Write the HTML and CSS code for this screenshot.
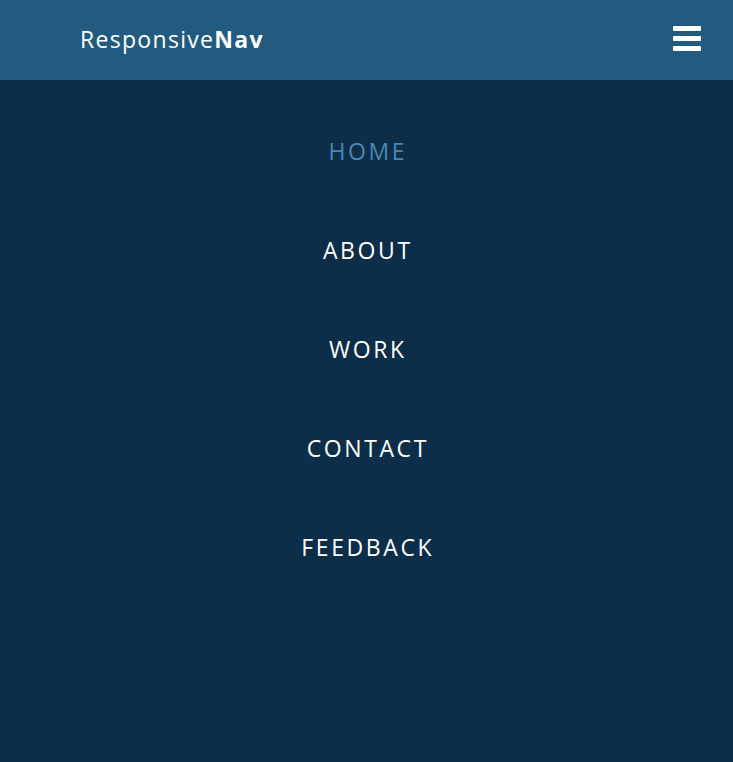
FILE: index.html
```html
<!DOCTYPE html>
<html lang="en">
<head>
<meta charset="utf-8">
<title>ResponsiveNav</title>
<link rel="stylesheet" href="styles.css">
</head>
<body>
<header class="topbar">
  <div class="logo">Responsive<b>Nav</b></div>
  <button class="burger" aria-label="Menu">
    <svg width="30" height="26" viewBox="0 0 30 26"><rect x="1" y="0" width="28" height="5" rx="1" fill="#fff"/><rect x="1" y="10" width="28" height="5" rx="1" fill="#fff"/><rect x="1" y="20" width="28" height="5" rx="1" fill="#fff"/></svg>
  </button>
</header>
<nav class="menu">
  <a class="item active" href="#">HOME</a>
  <a class="item" href="#">ABOUT</a>
  <a class="item" href="#">WORK</a>
  <a class="item" href="#">CONTACT</a>
  <a class="item" href="#">FEEDBACK</a>
</nav>
</body>
</html>
```
FILE: styles.css
```css
* { box-sizing: border-box; }
html, body { margin: 0; height: 100%; }
body {
  background: #0c2e48;
  font-family: "Open Sans", "DejaVu Sans", sans-serif;
}
.topbar {
  height: 80px;
  background: #235a80;
  display: flex;
  align-items: center;
  justify-content: space-between;
  padding: 0 31px 0 80px;
}
.logo {
  color: #fff;
  font-size: 23px;
  letter-spacing: 1.3px;
  margin-top: -2px;
}
.logo b { font-weight: 700; }
.burger {
  background: none;
  border: 0;
  padding: 0;
  display: flex;
  margin-top: -2px;
}
.menu {
  display: flex;
  flex-direction: column;
  align-items: center;
  padding-top: 21px;
}
.item {
  height: 99px;
  display: flex;
  align-items: center;
  color: #fff;
  text-decoration: none;
  font-size: 23px;
  letter-spacing: 2.6px;
  padding-left: 2.6px;
}
.item.active { color: #4b86b4; }
```
